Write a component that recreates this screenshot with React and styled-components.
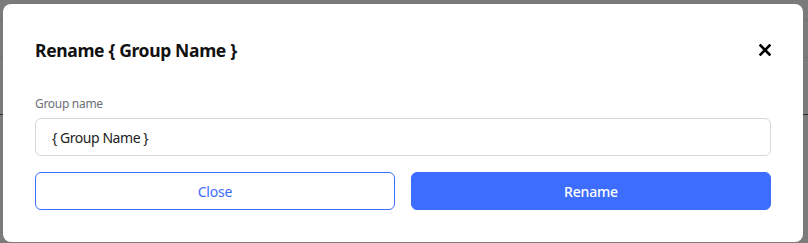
import React from 'react';
import styled, { createGlobalStyle } from 'styled-components';

const GlobalStyle = createGlobalStyle`
  html, body {
    margin: 0;
    padding: 0;
  }
  body {
    font-family: "Noto Sans", "Open Sans", sans-serif;
    background: #7b7b7b;
  }
  * {
    box-sizing: border-box;
  }
`;

// grey overlay, with the faint rules of the page behind it
const Backdrop = styled.div`
  min-height: 243px;
  padding: 4px 5px 1px 3px;
  background:
    linear-gradient(#717171, #717171) 0 20px / 100% 1px no-repeat,
    linear-gradient(#717171, #717171) 0 57px / 100% 1px no-repeat,
    linear-gradient(#2e2e2e, #2e2e2e) 0 114px / 100% 1px no-repeat,
    #7b7b7b;
`;

const Modal = styled.div`
  width: 800px;
  height: 238px;
  background: #fff;
  border-radius: 8px;
  padding: 32px;
  display: flex;
  flex-direction: column;
`;

const Header = styled.div`
  height: 28px;
  display: flex;
  align-items: center;
  justify-content: space-between;
`;

const Title = styled.h2`
  margin: 0;
  font-size: 17.5px;
  line-height: 28px;
  font-weight: 700;
  letter-spacing: -0.35px;
  color: #111;
`;

const CloseIcon = styled.button`
  border: none;
  background: none;
  padding: 0;
  width: 12px;
  height: 12px;
  display: flex;
  cursor: pointer;
`;

const Field = styled.div`
  margin-top: 32px;
  display: flex;
  flex-direction: column;
  gap: 6px;
`;

const Label = styled.label`
  font-size: 12px;
  line-height: 16px;
  letter-spacing: -0.3px;
  color: #6c6f78;
`;

const Input = styled.input`
  height: 38px;
  border: 1px solid #d6d6de;
  border-radius: 6px;
  padding: 0 16px;
  font-family: inherit;
  font-size: 14px;
  letter-spacing: -0.45px;
  color: #222;
  outline: none;
`;

const Actions = styled.div`
  margin-top: 16px;
  display: grid;
  grid-template-columns: 1fr 1fr;
  gap: 16px;
`;

const Button = styled.button`
  height: 38px;
  border-radius: 6px;
  border: 1px solid #3d6dfe;
  background: ${p => (p.$primary ? '#3d6dfe' : '#fff')};
  color: ${p => (p.$primary ? '#fff' : '#3d6dfe')};
  font-family: inherit;
  font-size: 14px;
  letter-spacing: -0.2px;
  font-weight: ${p => (p.$primary ? 500 : 400)};
  cursor: pointer;
`;

export default function App() {
  return (
    <>
      <GlobalStyle />
      <Backdrop>
        <Modal>
          <Header>
            <Title>Rename {'{'} Group Name {'}'}</Title>
            <CloseIcon aria-label="Close">
              <svg width="12" height="12" viewBox="0 0 12 12">
                <path d="M1.5 1.5 L10.5 10.5 M10.5 1.5 L1.5 10.5" stroke="#000" strokeWidth="2.6" strokeLinecap="square" />
              </svg>
            </CloseIcon>
          </Header>
          <Field>
            <Label>Group name</Label>
            <Input defaultValue="{ Group Name }" />
          </Field>
          <Actions>
            <Button>Close</Button>
            <Button $primary>Rename</Button>
          </Actions>
        </Modal>
      </Backdrop>
    </>
  );
}
